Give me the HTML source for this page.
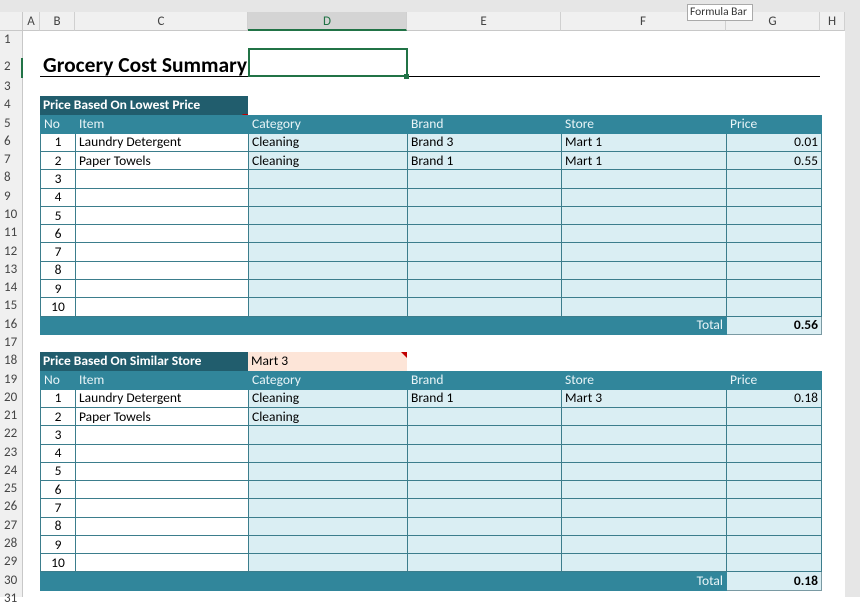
<!DOCTYPE html>
<html><head><meta charset="utf-8"><style>
*{margin:0;padding:0;box-sizing:border-box}
body{width:860px;height:597px;overflow:hidden;background:#fff;font-family:Calibri,"Liberation Sans",sans-serif;font-size:13.5px;color:#000;position:relative}
.abs{position:absolute}
.top{left:0;top:0;width:860px;height:12px;background:#e6e6e6}
.ch{top:12px;height:19px;background:#f0f0f0;border-bottom:1px solid #c8c8c8;border-right:1px solid #d0d0d0;text-align:center;line-height:19px;color:#444;font-size:13px}
.rn{position:absolute;left:0;width:23px;height:18.28px;line-height:18px;padding-left:4px;color:#444;font-size:13px}
table{position:absolute;border-collapse:collapse;table-layout:fixed}
td{height:18.28px;padding:0 3px;border:1px solid #3b7d8c;white-space:nowrap;overflow:hidden;line-height:16px}
.h td{background:#31869b;color:#e8f4f7;border-color:#31869b}
.w{background:#fff}.l{background:#daeef3}
.c{text-align:center}.r{text-align:right}
.t td{background:#31869b;color:#e8f4f7;border-color:#31869b}
</style></head><body>
<div class="abs top"></div>
<div class="abs" style="left:0;top:12px;width:23px;height:19px;background:#f0f0f0;border-right:1px solid #c8c8c8;border-bottom:1px solid #c8c8c8"></div>
<div class="abs ch" style="left:23px;width:17px">A</div>
<div class="abs ch" style="left:40px;width:35px">B</div>
<div class="abs ch" style="left:75px;width:173px">C</div>
<div class="abs ch" style="left:248px;width:159px;background:#d4d4d4;border-bottom:2px solid #217346;color:#217346">D</div>
<div class="abs ch" style="left:407px;width:154px">E</div>
<div class="abs ch" style="left:561px;width:165px">F</div>
<div class="abs ch" style="left:726px;width:94px">G</div>
<div class="abs ch" style="left:820px;width:25px">H</div>
<div class="abs" style="left:845px;top:12px;width:15px;height:585px;background:#e6e6e6"></div>
<div class="abs" style="left:687px;top:4px;width:66px;height:17px;background:#fff;border:1px solid #aaa;font-size:11.5px;line-height:15px;padding-left:2px;color:#333">Formula Bar</div>
<div class="abs" style="left:0;top:31px;width:23px;height:566px;background:#f0f0f0;border-right:1px solid #c8c8c8"></div>
<div class="rn" style="top:31px">1</div>
<div class="rn" style="top:58px;border-right:2px solid #217346;height:20px">2</div>
<div class="rn" style="top:78px">3</div><div class="rn" style="top:96.3px">4</div><div class="rn" style="top:114.6px">5</div><div class="rn" style="top:132.8px">6</div><div class="rn" style="top:151.1px">7</div><div class="rn" style="top:169.4px">8</div><div class="rn" style="top:187.7px">9</div><div class="rn" style="top:206px">10</div><div class="rn" style="top:224.2px">11</div><div class="rn" style="top:242.5px">12</div><div class="rn" style="top:260.8px">13</div><div class="rn" style="top:279.1px">14</div><div class="rn" style="top:297.4px">15</div><div class="rn" style="top:315.6px">16</div><div class="rn" style="top:333.9px">17</div><div class="rn" style="top:352.2px">18</div><div class="rn" style="top:370.5px">19</div><div class="rn" style="top:388.8px">20</div><div class="rn" style="top:407px">21</div><div class="rn" style="top:425.3px">22</div><div class="rn" style="top:443.6px">23</div><div class="rn" style="top:461.9px">24</div><div class="rn" style="top:480.2px">25</div><div class="rn" style="top:498.4px">26</div><div class="rn" style="top:516.7px">27</div><div class="rn" style="top:535px">28</div><div class="rn" style="top:553.3px">29</div><div class="rn" style="top:571.6px">30</div><div class="rn" style="top:589.9px">31</div>

<div class="abs" style="left:43px;top:52px;font-size:21.5px;font-weight:bold;line-height:26px">Grocery Cost Summary</div>
<div class="abs" style="left:40px;top:76px;width:780px;height:1px;background:#000"></div>
<div class="abs" style="left:248px;top:48px;width:160px;height:29px;border:2px solid #217346"></div>
<div class="abs" style="left:404px;top:74px;width:5px;height:5px;background:#217346"></div>

<div class="abs" style="left:40px;top:96px;width:208px;height:18.5px;background:#215d6d;color:#fff;font-weight:bold;padding-left:3px;line-height:18px">Price Based On Lowest Price</div>
<div class="abs" style="left:242px;top:114px;width:0;height:0;border-left:6px solid transparent;border-top:6px solid #c00000"></div>
<table style="left:40px;top:114.6px;width:781px">
<colgroup><col style="width:35px"><col style="width:173px"><col style="width:159px"><col style="width:154px"><col style="width:165px"><col style="width:95px"></colgroup>
<tr class="h"><td>No</td><td>Item</td><td>Category</td><td>Brand</td><td>Store</td><td>Price</td></tr>
<tr><td class="w c">1</td><td class="w">Laundry Detergent</td><td class="l">Cleaning</td><td class="l">Brand 3</td><td class="l">Mart 1</td><td class="l r">0.01</td></tr>
<tr><td class="w c">2</td><td class="w">Paper Towels</td><td class="l">Cleaning</td><td class="l">Brand 1</td><td class="l">Mart 1</td><td class="l r">0.55</td></tr>
<tr><td class="w c">3</td><td class="w"></td><td class="l"></td><td class="l"></td><td class="l"></td><td class="l"></td></tr>
<tr><td class="w c">4</td><td class="w"></td><td class="l"></td><td class="l"></td><td class="l"></td><td class="l"></td></tr>
<tr><td class="w c">5</td><td class="w"></td><td class="l"></td><td class="l"></td><td class="l"></td><td class="l"></td></tr>
<tr><td class="w c">6</td><td class="w"></td><td class="l"></td><td class="l"></td><td class="l"></td><td class="l"></td></tr>
<tr><td class="w c">7</td><td class="w"></td><td class="l"></td><td class="l"></td><td class="l"></td><td class="l"></td></tr>
<tr><td class="w c">8</td><td class="w"></td><td class="l"></td><td class="l"></td><td class="l"></td><td class="l"></td></tr>
<tr><td class="w c">9</td><td class="w"></td><td class="l"></td><td class="l"></td><td class="l"></td><td class="l"></td></tr>
<tr><td class="w c">10</td><td class="w"></td><td class="l"></td><td class="l"></td><td class="l"></td><td class="l"></td></tr>
<tr class="t"><td colspan="5" class="r">Total</td><td class="r" style="background:#daeef3;color:#000;font-weight:bold;border-color:#7a9aa3">0.56</td></tr>
</table>

<div class="abs" style="left:40px;top:352.2px;width:208px;height:18.5px;background:#215d6d;color:#fff;font-weight:bold;padding-left:3px;line-height:18px">Price Based On Similar Store</div>
<div class="abs" style="left:248px;top:352.2px;width:159px;height:18.5px;background:#fde5d8;padding-left:3px;line-height:18px">Mart 3</div>
<div class="abs" style="left:401px;top:352.2px;width:0;height:0;border-left:6px solid transparent;border-top:6px solid #c00000"></div>
<table style="left:40px;top:370.5px;width:781px">
<colgroup><col style="width:35px"><col style="width:173px"><col style="width:159px"><col style="width:154px"><col style="width:165px"><col style="width:95px"></colgroup>
<tr class="h"><td>No</td><td>Item</td><td>Category</td><td>Brand</td><td>Store</td><td>Price</td></tr>
<tr><td class="w c">1</td><td class="w">Laundry Detergent</td><td class="l">Cleaning</td><td class="l">Brand 1</td><td class="l">Mart 3</td><td class="l r">0.18</td></tr>
<tr><td class="w c">2</td><td class="w">Paper Towels</td><td class="l">Cleaning</td><td class="l"></td><td class="l"></td><td class="l"></td></tr>
<tr><td class="w c">3</td><td class="w"></td><td class="l"></td><td class="l"></td><td class="l"></td><td class="l"></td></tr>
<tr><td class="w c">4</td><td class="w"></td><td class="l"></td><td class="l"></td><td class="l"></td><td class="l"></td></tr>
<tr><td class="w c">5</td><td class="w"></td><td class="l"></td><td class="l"></td><td class="l"></td><td class="l"></td></tr>
<tr><td class="w c">6</td><td class="w"></td><td class="l"></td><td class="l"></td><td class="l"></td><td class="l"></td></tr>
<tr><td class="w c">7</td><td class="w"></td><td class="l"></td><td class="l"></td><td class="l"></td><td class="l"></td></tr>
<tr><td class="w c">8</td><td class="w"></td><td class="l"></td><td class="l"></td><td class="l"></td><td class="l"></td></tr>
<tr><td class="w c">9</td><td class="w"></td><td class="l"></td><td class="l"></td><td class="l"></td><td class="l"></td></tr>
<tr><td class="w c">10</td><td class="w"></td><td class="l"></td><td class="l"></td><td class="l"></td><td class="l"></td></tr>
<tr class="t"><td colspan="5" class="r">Total</td><td class="r" style="background:#daeef3;color:#000;font-weight:bold;border-color:#7a9aa3">0.18</td></tr>
</table>
</body></html>
